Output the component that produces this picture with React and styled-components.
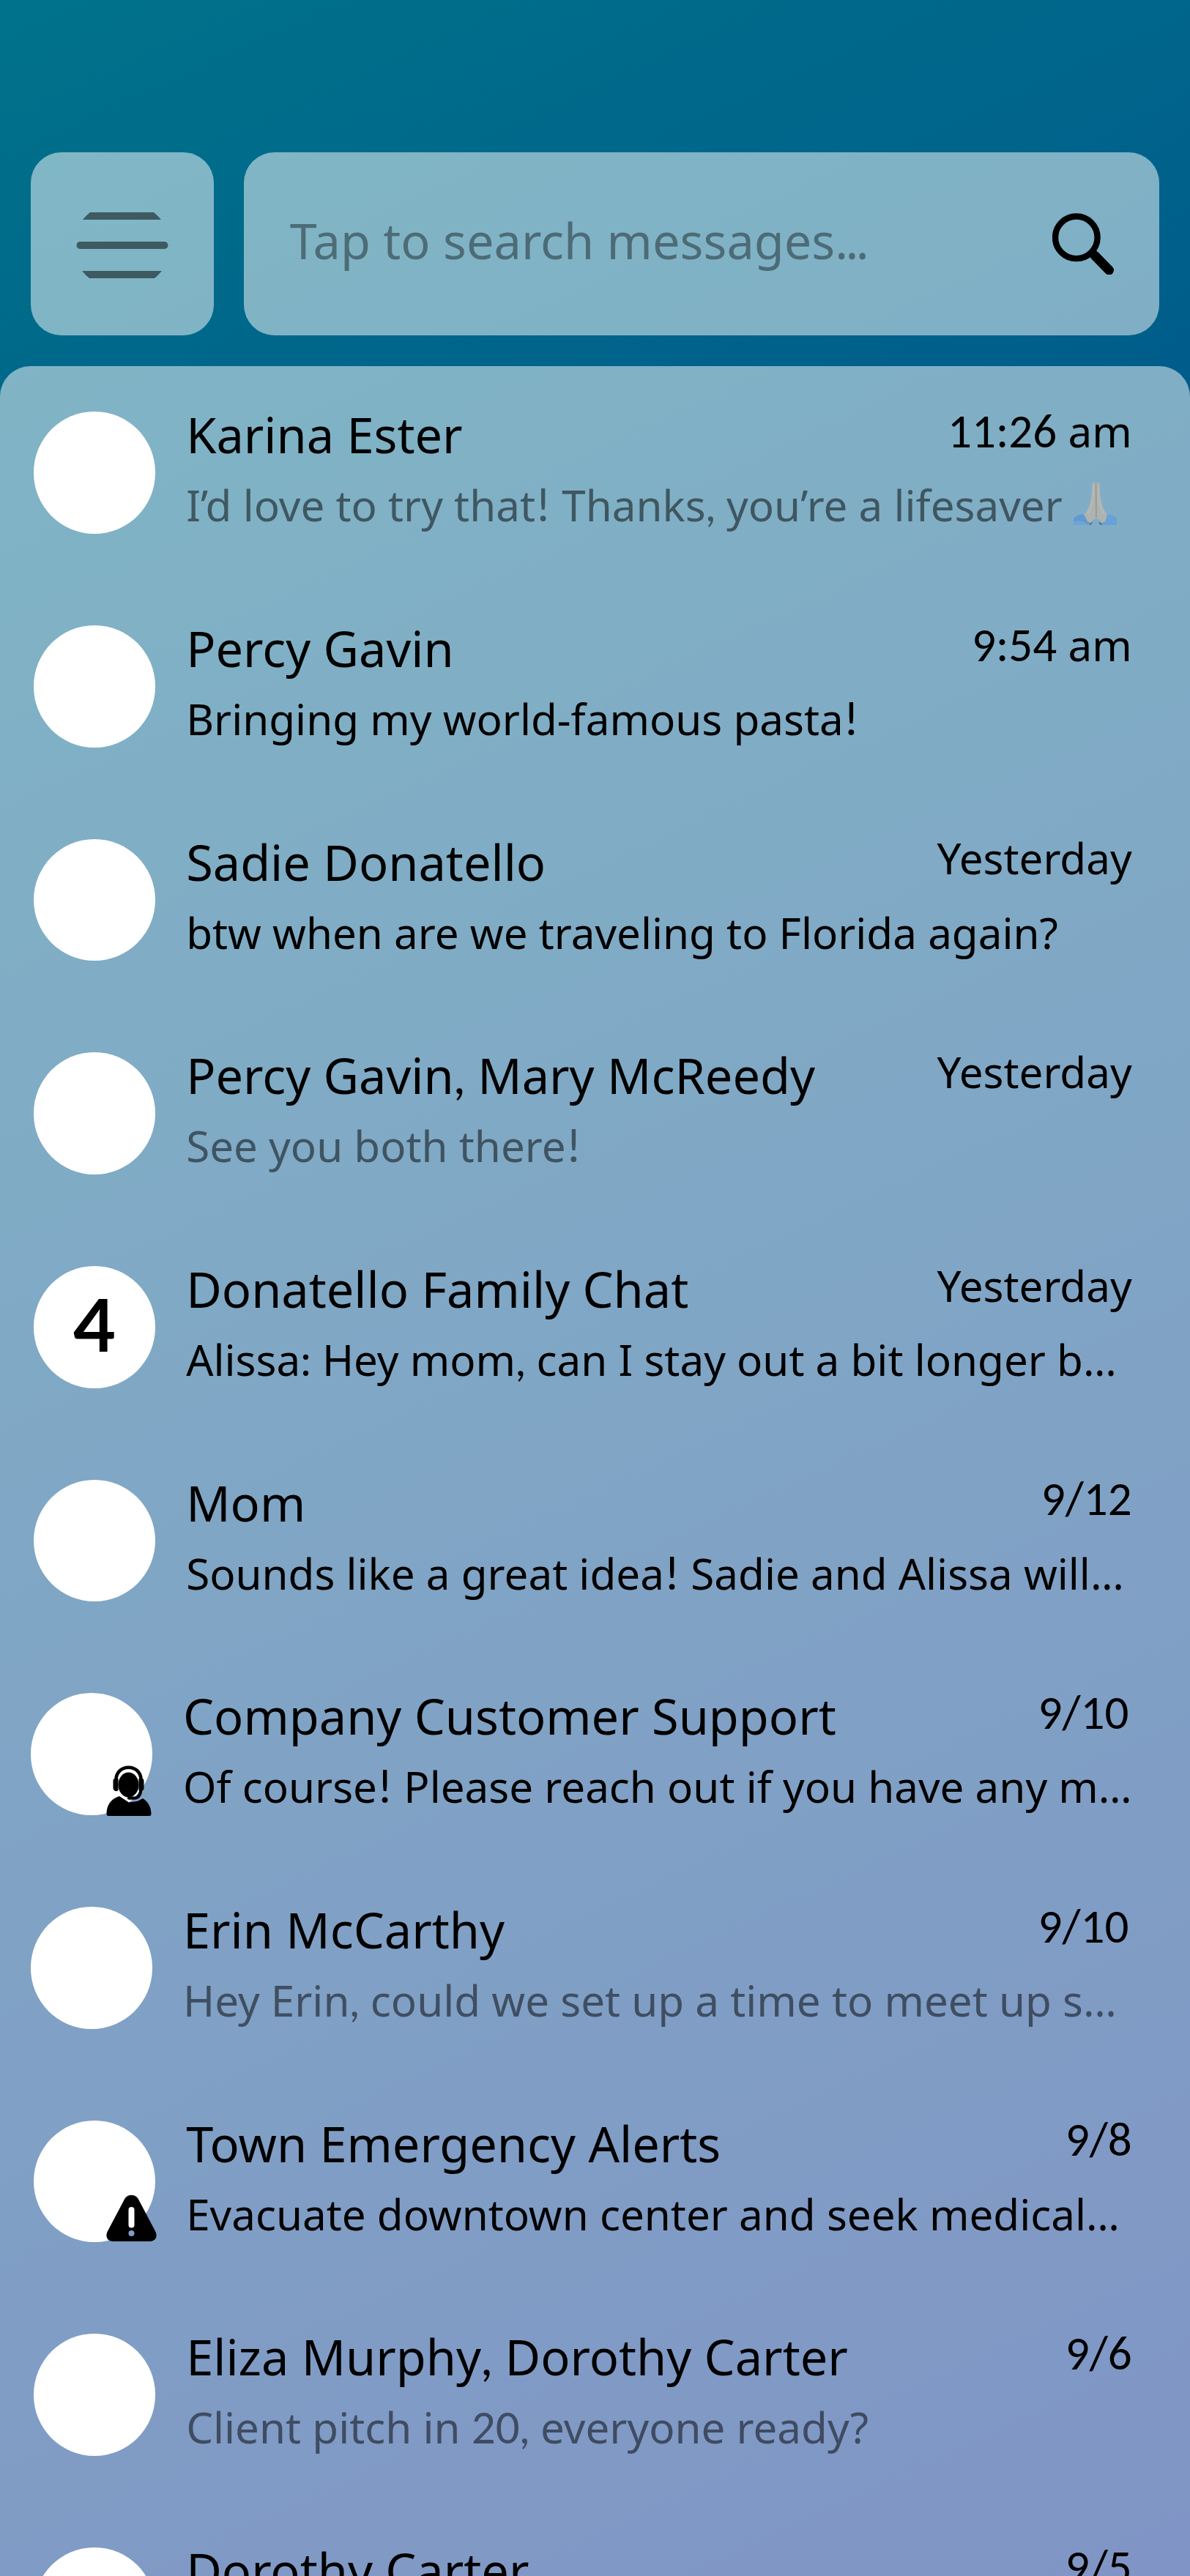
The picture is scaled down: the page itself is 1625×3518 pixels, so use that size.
import React from "react";
import styled, { createGlobalStyle } from "styled-components";

const Global = createGlobalStyle`
  * { box-sizing: border-box; }
  html, body { margin: 0; padding: 0; }
  body { font-family: "Noto Sans", sans-serif; color: #000; overflow: hidden; }
`;

const Screen = styled.div`
  width: 1625px;
  height: 3518px;
  overflow: hidden;
  display: flex;
  flex-direction: column;
  padding-top: 208.33px;
  background: linear-gradient(155.2deg, #00728b 0%, #002a8b 100%);
`;

const TopBar = styled.header`
  display: flex;
  gap: 41.67px;
  height: 250px;
  padding: 0 41.67px;
  flex: none;
`;

const Tile = styled.div`
  display: flex;
  align-items: center;
  background: rgba(255, 255, 255, 0.5);
  border-radius: 41.67px;
`;

const MenuButton = styled(Tile)`
  width: 250px;
  justify-content: center;
  padding-top: 3.3px;
`;

const SearchBox = styled(Tile)`
  flex: 1;
  justify-content: space-between;
  padding: 0 62px 0 62.5px;
`;

const Placeholder = styled.span`
  font-size: 66.67px;
  line-height: 90px;
  color: rgba(0, 0, 0, 0.4);
  margin-top: -9px;
`;

const Panel = styled.main`
  flex: 1;
  min-height: 0;
  overflow: hidden;
  margin-top: 41.67px;
  padding-top: 62.5px;
  background: rgba(255, 255, 255, 0.5);
  border-radius: 41.67px 41.67px 0 0;
`;

const Row = styled.article`
  display: flex;
  height: 291.67px;
  gap: 41.67px;
  padding: 0 ${(p) => (p.$shifted ? 83.5 : 79.3)}px 0 ${(p) => (p.$shifted ? 41.67 : 45.83)}px;
`;

const Avatar = styled.div`
  position: relative;
  flex: none;
  width: 166.67px;
  height: 166.67px;
  border-radius: 50%;
  background: #fff;
  display: flex;
  align-items: center;
  justify-content: center;
`;

const Count = styled.span`
  font-family: Lato, sans-serif;
  font-size: 100px;
  font-weight: 700;
  line-height: 120px;
  margin-top: -10px;
`;

const Badge = styled.svg`
  position: absolute;
  left: ${(p) => p.$left}px;
  top: ${(p) => p.$top}px;
`;

const Content = styled.div`
  flex: 1;
  min-width: 0;
`;

const Heading = styled.div`
  display: flex;
  justify-content: space-between;
  align-items: flex-start;
  height: 84px;
`;

const Name = styled.span`
  font-size: 66.67px;
  line-height: 91px;
  margin-top: -14px;
  white-space: nowrap;
`;

const Time = styled.time`
  font-size: 58.33px;
  line-height: 80px;
  margin-top: -13.5px;
  white-space: nowrap;
`;

const Preview = styled.div`
  font-size: 58.33px;
  line-height: 80px;
  margin-top: 4px;
  white-space: nowrap;
  opacity: ${(p) => (p.$read ? 0.5 : 1)};
`;

const Figure = styled.span`
  font-family: Carlito, Lato, sans-serif;
  font-size: 1.115em;
  line-height: 0;
`;

const Mark = styled.span`
  font-family: Lato, sans-serif;
  line-height: 0;
`;

const Dots = styled.span`
  letter-spacing: ${(p) => (p.$tight ? -3.6 : -0.5)}px;
`;

const HandsEmoji = styled.svg`
  margin-left: 15px;
  vertical-align: -5px;
`;

/* Figures and "!" are set in Carlito, commas and colons in Lato, letters in Noto Sans. */
const Mixed = ({ children }) =>
  children.split(/(\d[\d/:]*|[!,:]|\.{3})/).map((part, i) => {
    if (i % 2 === 0) return part;
    if (part === "...") return <Dots key={i}>{part}</Dots>;
    if (/^[,:]/.test(part)) return <Mark key={i}>{part}</Mark>;
    return <Figure key={i}>{part}</Figure>;
  });

const MenuIcon = () => (
  <svg width="126" height="92" viewBox="0 0 126 92" fill="#000" opacity="0.5">
    <path d="M19 1H106Q111 5 116 11H9Q14 5 19 1Z" />
    <rect x="0.5" y="41" width="125" height="10" rx="5" />
    <path d="M8 81H117Q112 87 107 91H18Q13 87 8 81Z" />
  </svg>
);

const SearchIcon = () => (
  <svg width="84" height="84" viewBox="0 0 84 84" fill="none" stroke="#000">
    <circle cx="32.8" cy="33.3" r="28.8" strokeWidth="8.4" />
    <path d="M58 58L77.5 78" strokeWidth="13" strokeLinecap="round" />
  </svg>
);

const AgentBadge = () => (
  <Badge $left={103} $top={98.5} width="62" height="70" viewBox="0 0 62 70">
    <ellipse cx="30.5" cy="26.5" rx="14" ry="17" />
    <path d="M13.5 20C13.5 -3 47.5 -3 47.5 20" fill="none" stroke="#000" strokeWidth="4.6" />
    <path d="M9.5 20Q10 18 12 18H16.5V34Q14.5 36 11.5 34.5Q9.5 34 9.5 31Z" />
    <path d="M51.5 20Q51 18 49 18H44.5V34Q46.5 35.5 49 34.5Q51.5 34 51.5 31Z" />
    <path d="M47.3 31Q47.5 43.5 39 44.7H31" fill="none" stroke="#000" strokeWidth="4.2" strokeLinecap="round" />
    <path d="M18 42L31 50.5L43 48.8L50 45C58 50 61.5 58 61.5 66Q61.5 69 59 69H3Q0.5 69 0.5 66C0.5 56 5 46 18 42Z" />
  </Badge>
);

const AlertBadge = () => (
  <Badge $left={99} $top={101} width="70" height="66" viewBox="0 0 70 66">
    <path
      fillRule="evenodd"
      d="M25.5 5.5C29 -1 40 -1 43.5 5.5L67 50C71 57.5 67 64 60 64H9C2 64 -2 57.5 2 50ZM30.5 21V41.5A4 4 0 0 0 38.5 41.5V21A4 4 0 0 0 30.5 21ZM38.5 53A4 4 0 1 0 30.5 53A4 4 0 1 0 38.5 53Z"
    />
  </Badge>
);

const FoldedHands = () => (
  <HandsEmoji width="59" height="58" viewBox="0 0 59 58" role="img" aria-label="🙏🏼">
    <path d="M0 49Q5 44 13 43L25 58H0Z" fill="#3f88e0" />
    <path d="M59 49Q54 44 46 43L36 58H59Z" fill="#4f96ea" />
    <path d="M0 58V53Q10 50 22 58Z" fill="#5c9fea" />
    <path d="M21 58L24 54H26L24 58ZM36 58L34 54H37L40 58Z" fill="#4a4560" />
    <path
      d="M25.5 1Q28 -1 30.5 1Q33 -1 35.5 1C36 14 37 27 41 36Q43 40 46 43L43.5 53L38 55Q36 49.5 31 49Q26 49.5 23.5 55L19 53L14 43Q18 40 20 35C24 26 25 14 25.5 1Z"
      fill="#dfb99a"
    />
    <path d="M30.5 1L31 48" stroke="#b07c68" strokeWidth="1.5" />
    <path d="M27.5 4C27.5 20 26 32 20 42M33.5 4C33.5 20 35 32 41 42" stroke="#e6c8ac" strokeWidth="2" fill="none" />
  </HandsEmoji>
);

const messages = [
  { name: "Karina Ester", time: "11:26 am", text: "I’d love to try that! Thanks, you’re a lifesaver", emoji: <FoldedHands />, read: true },
  { name: "Percy Gavin", time: "9:54 am", text: "Bringing my world-famous pasta!" },
  { name: "Sadie Donatello", time: "Yesterday", text: "btw when are we traveling to Florida again?" },
  { name: "Percy Gavin, Mary McReedy", time: "Yesterday", text: "See you both there!", read: true },
  { name: "Donatello Family Chat", time: "Yesterday", text: "Alissa: Hey mom, can I stay out a bit longer b...", count: 4 },
  { name: "Mom", time: "9/12", text: "Sounds like a great idea! Sadie and Alissa will..." },
  { name: "Company Customer Support", time: "9/10", text: "Of course! Please reach out if you have any m...", shifted: true, badge: <AgentBadge /> },
  { name: "Erin McCarthy", time: "9/10", text: "Hey Erin, could we set up a time to meet up s...", read: true, shifted: true },
  { name: "Town Emergency Alerts", time: "9/8", text: "Evacuate downtown center and seek medical...", badge: <AlertBadge /> },
  { name: "Eliza Murphy, Dorothy Carter", time: "9/6", text: "Client pitch in 20, everyone ready?", read: true },
  { name: "Dorothy Carter", time: "9/5", text: "" },
];

export default function App() {
  return (
    <Screen>
      <Global />
      <TopBar>
        <MenuButton>
          <MenuIcon />
        </MenuButton>
        <SearchBox>
          <Placeholder>
            Tap to search messages<Dots $tight>...</Dots>
          </Placeholder>
          <SearchIcon />
        </SearchBox>
      </TopBar>
      <Panel>
        {messages.map((m, i) => (
          <Row key={i} $shifted={m.shifted}>
            <Avatar>
              {m.count && <Count>{m.count}</Count>}
              {m.badge}
            </Avatar>
            <Content>
              <Heading>
                <Name>
                  <Mixed>{m.name}</Mixed>
                </Name>
                <Time>
                  <Mixed>{m.time}</Mixed>
                </Time>
              </Heading>
              <Preview $read={m.read}>
                <Mixed>{m.text}</Mixed>
                {m.emoji}
              </Preview>
            </Content>
          </Row>
        ))}
      </Panel>
    </Screen>
  );
}
